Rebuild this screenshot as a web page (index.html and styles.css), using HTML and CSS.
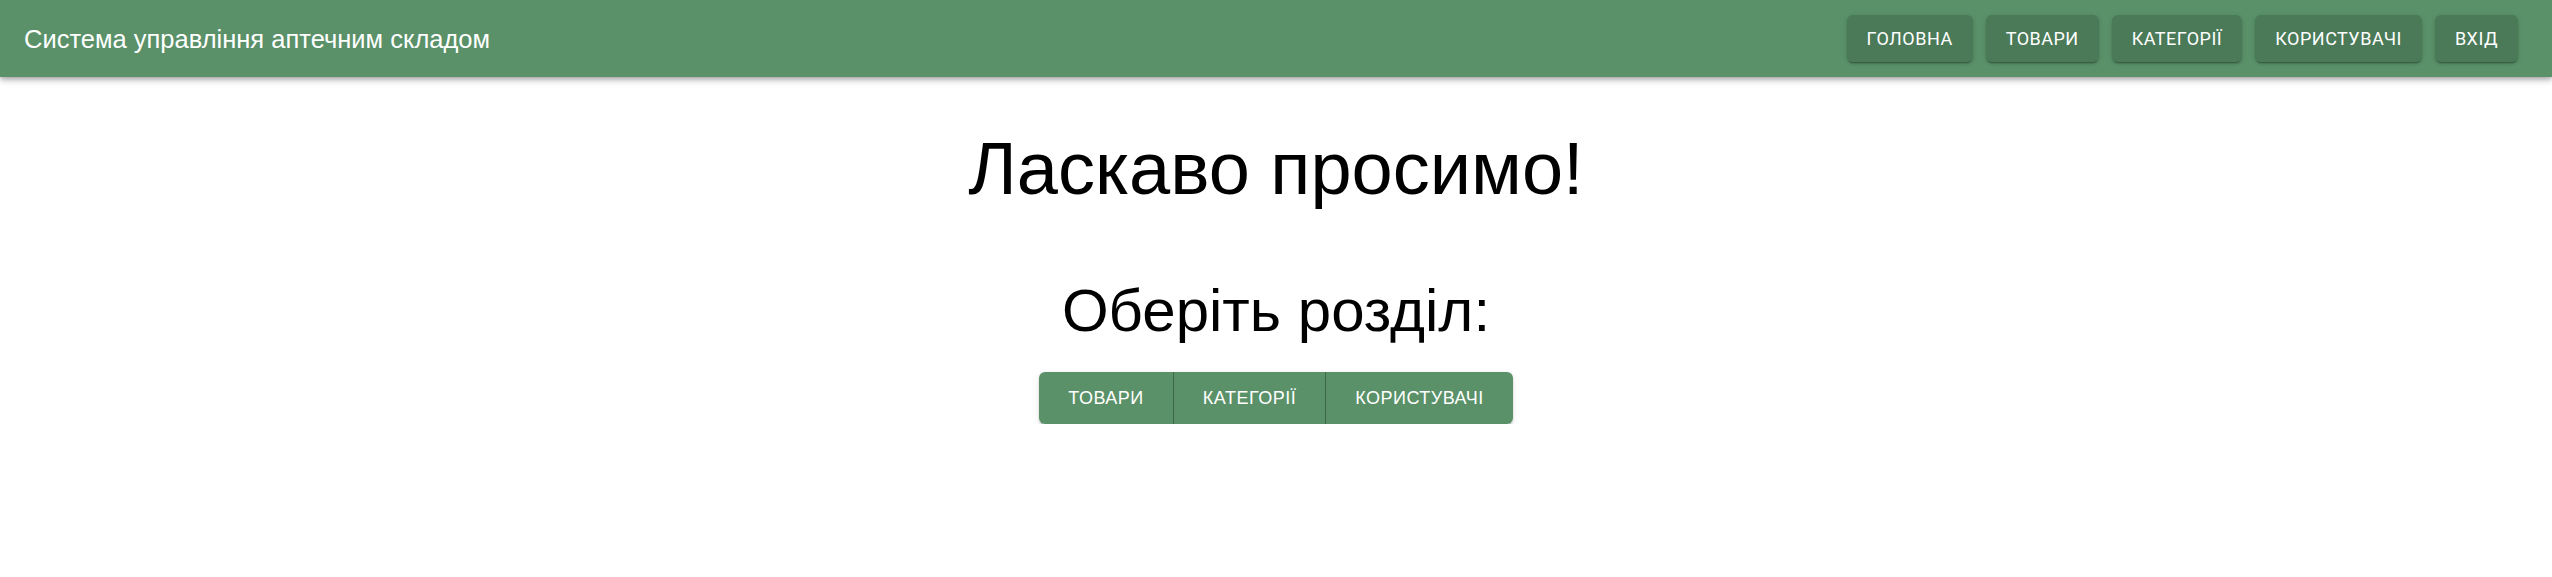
FILE: index.html
```html
<!DOCTYPE html>
<html lang="uk">
<head>
<meta charset="utf-8">
<title>Система управління аптечним складом</title>
<link rel="stylesheet" href="styles.css">
</head>
<body>
<header class="appbar">
  <div class="brand">Система управління аптечним складом</div>
  <nav class="nav">
    <a class="nav-btn" href="#">Головна</a>
    <a class="nav-btn" href="#">Товари</a>
    <a class="nav-btn" href="#">Категорії</a>
    <a class="nav-btn" href="#">Користувачі</a>
    <a class="nav-btn" href="#">Вхід</a>
  </nav>
</header>
<main class="home">
  <h1 class="welcome">Ласкаво просимо!</h1>
  <h2 class="choose">Оберіть розділ:</h2>
  <div class="btn-group">
    <a class="group-btn" href="#">Товари</a>
    <a class="group-btn" href="#">Категорії</a>
    <a class="group-btn" href="#">Користувачі</a>
  </div>
</main>
</body>
</html>
```
FILE: styles.css
```css
html, body {
  margin: 0;
  padding: 0;
  background: #ffffff;
  font-family: "Liberation Sans", Arial, sans-serif;
}

.appbar {
  height: 77px;
  background: #5a9169;
  display: flex;
  align-items: center;
  justify-content: space-between;
  padding: 0 34px 0 24px;
  box-shadow: 0 2px 4px -1px rgba(0,0,0,0.2), 0 4px 5px 0 rgba(0,0,0,0.14), 0 1px 10px 0 rgba(0,0,0,0.12);
  position: relative;
  z-index: 1;
}

.brand {
  color: #ffffff;
  font-size: 25.5px;
  line-height: 30px;
}

.nav {
  display: flex;
  gap: 13px;
}

.nav-btn {
  font-family: Roboto, "Liberation Sans", sans-serif;
  font-size: 18px;
  font-weight: 400;
  line-height: 23px;
  letter-spacing: 0.5px;
  text-transform: uppercase;
  text-decoration: none;
  color: #ffffff;
  background: #4a7a58;
  padding: 12px 20px;
  border-radius: 6px;
  box-shadow: 0 3px 1px -2px rgba(0,0,0,0.2), 0 2px 2px 0 rgba(0,0,0,0.14), 0 1px 5px 0 rgba(0,0,0,0.12);
}

.home {
  display: flex;
  flex-direction: column;
  align-items: center;
}

.welcome {
  margin: 48px 0 0;
  font-size: 74px;
  line-height: 1.2;
  font-weight: 400;
  color: #000;
}

.choose {
  margin: 61px 0 0;
  font-size: 60px;
  line-height: 1.2;
  font-weight: 400;
  color: #000;
}

.btn-group {
  margin-top: 25px;
  display: flex;
  border-radius: 6px;
  overflow: hidden;
  box-shadow: 0 3px 1px -2px rgba(0,0,0,0.2), 0 2px 2px 0 rgba(0,0,0,0.14), 0 1px 5px 0 rgba(0,0,0,0.12);
}

.group-btn {
  font-size: 18px;
  line-height: 24px;
  letter-spacing: 0.5px;
  text-transform: uppercase;
  text-decoration: none;
  color: #ffffff;
  background: #5a9169;
  padding: 14px 29px;
}

.group-btn + .group-btn {
  border-left: 1px solid #3e6a4a;
}
```
